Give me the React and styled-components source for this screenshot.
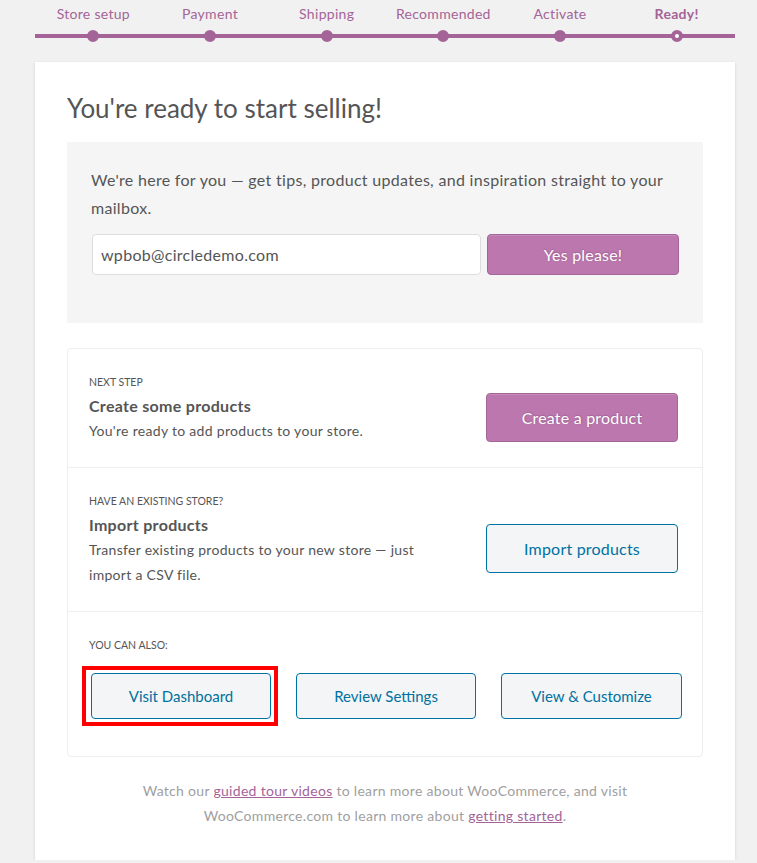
import styled, { createGlobalStyle } from "styled-components";

const GlobalStyle = createGlobalStyle`
  html, body {
    margin: 0;
    padding: 0;
    background: #f1f1f1;
  }
  body {
    font-family: "Lato", "Liberation Sans", sans-serif;
    letter-spacing: 0.3px;
    color: #555;
  }
  * {
    box-sizing: border-box;
  }
`;

const steps = ["Store setup", "Payment", "Shipping", "Recommended", "Activate", "Ready!"];

export default function App() {
  return (
    <>
      <GlobalStyle />
      <Page>
        <Steps>
          {steps.map((step, i) => (
            <Step key={step} $active={i === steps.length - 1}>
              {step}
            </Step>
          ))}
        </Steps>

        <Card>
          <Title>You're ready to start selling!</Title>

          <Newsletter>
            <NewsText>
              We're here for you — get tips, product updates, and inspiration straight to your mailbox.
            </NewsText>
            <NewsForm>
              <EmailInput type="email" defaultValue="wpbob@circledemo.com" />
              <PrimaryButton $height={41}>Yes please!</PrimaryButton>
            </NewsForm>
          </Newsletter>

          <NextSteps>
            <StepItem>
              <StepInfo>
                <Eyebrow>Next step</Eyebrow>
                <ItemTitle>Create some products</ItemTitle>
                <ItemDesc>You're ready to add products to your store.</ItemDesc>
              </StepInfo>
              <StepAction>
                <PrimaryButton $height={49}>Create a product</PrimaryButton>
              </StepAction>
            </StepItem>

            <StepItem>
              <StepInfo>
                <Eyebrow>Have an existing store?</Eyebrow>
                <ItemTitle>Import products</ItemTitle>
                <ItemDesc>Transfer existing products to your new store — just import a CSV file.</ItemDesc>
              </StepInfo>
              <StepAction>
                <SecondaryButton $height={49}>Import products</SecondaryButton>
              </StepAction>
            </StepItem>

            <AlsoItem>
              <Eyebrow>You can also:</Eyebrow>
              <AlsoButtons>
                <SecondaryButton $height={46} $width={180} $small $highlighted>
                  Visit Dashboard
                </SecondaryButton>
                <SecondaryButton $height={46} $width={180} $small>
                  Review Settings
                </SecondaryButton>
                <SecondaryButton $height={46} $width={181} $small>
                  View &amp; Customize
                </SecondaryButton>
              </AlsoButtons>
            </AlsoItem>
          </NextSteps>

          <Footer>
            Watch our <a href="#">guided tour videos</a> to learn more about WooCommerce, and visit
            WooCommerce.com to learn more about <a href="#">getting started</a>.
          </Footer>
        </Card>
      </Page>
    </>
  );
}

const Page = styled.div`
  width: 700px;
  margin-left: 35px;
`;

const Steps = styled.ol`
  display: flex;
  list-style: none;
  margin: 0;
  padding: 4px 0 0;
`;

const Step = styled.li`
  position: relative;
  flex: 1;
  text-align: center;
  font-size: 14px;
  line-height: 20px;
  color: #a46497;
  font-weight: ${p => (p.$active ? 700 : 400)};
  padding-bottom: 10px;
  border-bottom: 4px solid #a46497;

  &::before {
    content: "";
    position: absolute;
    bottom: 0;
    left: 50%;
    width: 4px;
    height: 4px;
    margin-left: -6px;
    margin-bottom: -8px;
    border: 4px solid #a46497;
    border-radius: 100%;
    background: ${p => (p.$active ? "#fff" : "#a46497")};
  }
`;

const Card = styled.div`
  margin-top: 24px;
  background: #fff;
  box-shadow: 0 1px 3px rgba(0, 0, 0, 0.13);
  padding: 30px 32px 32px;
`;

const Title = styled.h1`
  margin: 0 0 18px;
  font-size: 26px;
  line-height: 32px;
  font-weight: 400;
  letter-spacing: 0;
  color: #555;
`;

const Newsletter = styled.div`
  background: #f5f5f5;
  padding: 24px 24px 48px;
`;

const NewsText = styled.p`
  margin: 0 0 12px;
  font-size: 16px;
  line-height: 28px;
  color: #555;
`;

const NewsForm = styled.div`
  display: flex;
  gap: 6px;
  padding-left: 1px;
`;

const EmailInput = styled.input`
  flex: 1;
  height: 41px;
  border: 1px solid #ddd;
  border-radius: 4px;
  padding: 0 8px;
  font-family: inherit;
  font-size: 16px;
  letter-spacing: 0.3px;
  color: #555;
  background: #fff;
  outline: none;
`;

const BaseButton = styled.button`
  position: relative;
  height: ${p => p.$height}px;
  width: ${p => (p.$width ? `${p.$width}px` : "192px")};
  border-radius: 4px;
  font-family: inherit;
  font-size: ${p => (p.$small ? "15px" : "16px")};
  letter-spacing: ${p => (p.$small ? "0" : "0.2px")};
  cursor: pointer;
  flex-shrink: 0;
`;

const PrimaryButton = styled(BaseButton)`
  background: #bb77ae;
  border: 1px solid #a36597;
  color: #fff;
  text-shadow: 0 -1px 1px #a36597, 1px 0 1px #a36597;
  box-shadow: inset 0 1px 0 rgba(255, 255, 255, 0.15);
`;

const SecondaryButton = styled(BaseButton)`
  background: #f3f5f6;
  border: 1px solid #0071a1;
  color: #0071a1;

  &::after {
    content: "";
    display: ${p => (p.$highlighted ? "block" : "none")};
    position: absolute;
    top: -8px;
    bottom: -8px;
    left: -10px;
    right: -8px;
    border: 4px solid #ff0000;
    pointer-events: none;
  }
`;

const NextSteps = styled.div`
  margin-top: 25px;
  border: 1px solid #eee;
  border-radius: 4px;
`;

const StepItem = styled.div`
  display: flex;
  align-items: center;
  padding: 25px 24px 24px 21px;
  border-bottom: 1px solid #eee;
`;

const StepInfo = styled.div`
  flex: 1;
  padding-right: 50px;
`;

const StepAction = styled.div`
  padding-top: 17px;
`;

const Eyebrow = styled.p`
  margin: 0 0 4px;
  font-size: 10.5px;
  line-height: 16px;
  letter-spacing: 0;
  text-transform: uppercase;
  color: #555;
`;

const ItemTitle = styled.h3`
  margin: 0;
  font-size: 16px;
  line-height: 24px;
  font-weight: 700;
  color: #555;
`;

const ItemDesc = styled.p`
  margin: 0;
  font-size: 14px;
  line-height: 25px;
  color: #555;
`;

const AlsoItem = styled.div`
  padding: 25px 24px 37px 21px;
`;

const AlsoButtons = styled.div`
  display: flex;
  gap: 25px;
  margin-top: 20px;
  padding-left: 2px;
`;

const Footer = styled.p`
  margin: 21px 0 0;
  padding: 0 30px;
  text-align: center;
  font-size: 14px;
  line-height: 25px;
  color: #a0a0a0;

  a {
    color: #a46497;
    text-decoration: underline;
  }
`;
